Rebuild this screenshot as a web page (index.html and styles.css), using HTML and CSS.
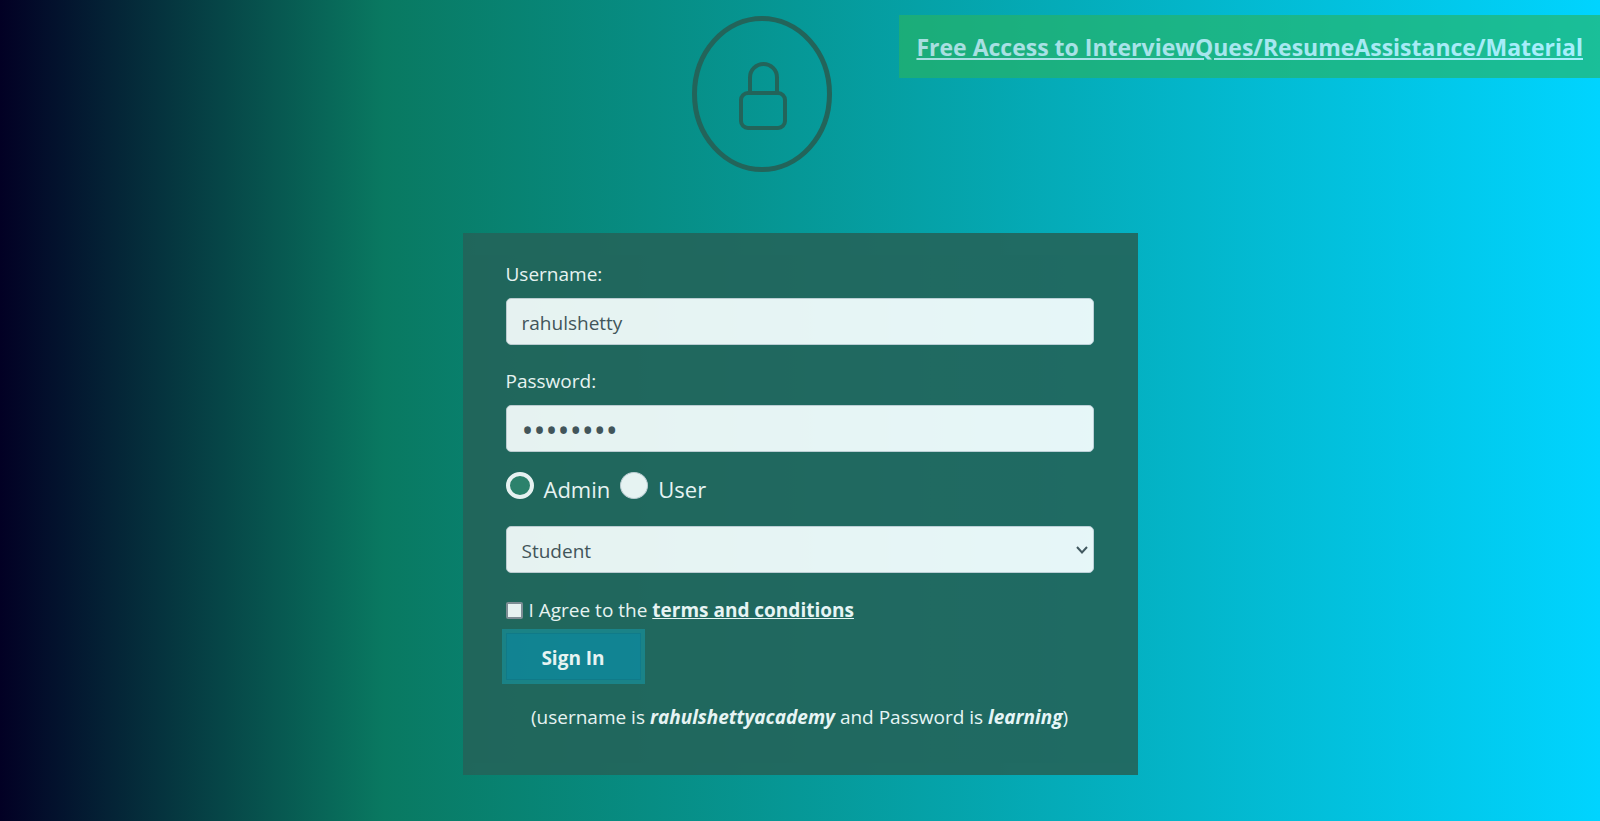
FILE: index.html
```html
<!DOCTYPE html>
<html lang="en">
<head>
<meta charset="utf-8">
<title>Login</title>
<link rel="stylesheet" href="styles.css">
</head>
<body>
<header class="top">
  <svg class="lock" viewBox="0 0 140 156" width="140" height="156" fill="none" stroke="currentColor" aria-hidden="true">
    <ellipse cx="70" cy="78" rx="67.5" ry="75.5" stroke-width="5"/>
    <path d="M58 76V61.500A13.500 13.500 0 0 1 85 61.500V76" stroke-width="4"/>
    <rect x="49" y="77" width="44" height="35" rx="7" stroke-width="4"/>
  </svg>
  <a class="banner" href="#">Free Access to InterviewQues/ResumeAssistance/Material</a>
</header>
<main>
  <form class="card">
    <label class="label" for="username">Username:</label>
    <input class="control" id="username" type="text" value="rahulshetty">
    <label class="label" for="password">Password:</label>
    <input class="control password" id="password" type="password" value="learning">
    <div class="roles">
      <label class="role"><input class="radio" type="radio" name="role" checked><span>Admin</span></label>
      <label class="role"><input class="radio" type="radio" name="role"><span>User</span></label>
    </div>
    <div class="picker">
      <select class="control" aria-label="Occupation"><option>Student</option><option>Teacher</option><option>Consultant</option></select>
      <svg class="chevron" viewBox="0 0 12 8" width="12" height="8" fill="none" stroke="currentColor" stroke-width="2" aria-hidden="true"><path d="M1 1L6 6.500L11 1"/></svg>
    </div>
    <div class="agree">
      <input class="check" id="terms" type="checkbox">
      <label for="terms">I Agree to the <a class="terms" href="#">terms and conditions</a></label>
    </div>
    <button class="signin" type="button">Sign In</button>
    <p class="hint">(username is <b><i>rahulshettyacademy</i></b> and Password is <b><i>learning</i></b>)</p>
  </form>
</main>
</body>
</html>
```
FILE: styles.css
```css
* { box-sizing: border-box; }

body {
  margin: 0;
  min-height: 100vh;
  background: linear-gradient(90deg, #020024 0%, #097961 24%, #00d4ff 100%);
  color: #fff;
  font: 19px/28px "Segoe UI", "Open Sans", "Noto Sans", sans-serif;
}

.top {
  display: flex;
  align-items: flex-start;
  justify-content: space-between;
  padding: 15px 0 0 43.25%;
}

.lock {
  flex: none;
  margin-top: 1px;
  color: #23645a;
}

.banner {
  padding: 13px 17px 11px;
  background: #28b463;
  color: #fff;
  font-size: 23px;
  font-weight: 700;
  line-height: 39px;
  opacity: .65;
  white-space: nowrap;
}

.card {
  display: flex;
  flex-direction: column;
  width: 675px;
  max-width: 100%;
  margin: 61px auto 40px;
  padding: 27px 44px 44px 43px;
  background: #23645a;
  opacity: .9;
}

.label { margin-bottom: 10px; }

.control {
  width: 100%;
  height: 47px;
  margin: 0;
  padding: 8px 15px 6px;
  border: 1px solid #ced4da;
  border-radius: 5px;
  background: #fff;
  color: #495057;
  font: inherit;
}

.control + .label { margin-top: 22px; }

.password { font-size: 32px; }

.picker {
  position: relative;
  display: flex;
}

select.control { appearance: none; }

.chevron {
  position: absolute;
  top: 20px;
  right: 6px;
  color: #495057;
  pointer-events: none;
}

.roles {
  display: flex;
  gap: 10px;
  margin: 20px 0 27px;
}

.role {
  display: flex;
  gap: 10px;
  font-size: 22px;
  line-height: 27px;
}

.role span { padding-top: 4px; height: 27px; }

.radio {
  appearance: none;
  width: 28px;
  height: 27px;
  margin: 0;
  border: 1px solid #ced4da;
  border-radius: 50%;
  background: #fff;
}

.radio:checked {
  border: 4px solid #fff;
  background: #30826c;
}

.agree {
  display: flex;
  align-items: center;
  gap: 6px;
  margin-top: 23px;
}

.check {
  appearance: none;
  width: 17px;
  height: 17px;
  margin: 0;
  border: 2px solid #8a8f98;
  border-radius: 2px;
  background: #fff;
}

.terms {
  color: #fff;
  font-weight: 700;
}

.signin {
  align-self: flex-start;
  width: 135px;
  height: 47px;
  padding: 2px 0 0;
  margin-top: 9px;
  border: 1px solid #117a8b;
  background: #138496;
  box-shadow: 0 0 0 4px rgba(23, 162, 184, .5);
  color: #fff;
  font: inherit;
  font-weight: 700;
}

.hint {
  margin: 23px 0 0;
  text-align: center;
}
```
